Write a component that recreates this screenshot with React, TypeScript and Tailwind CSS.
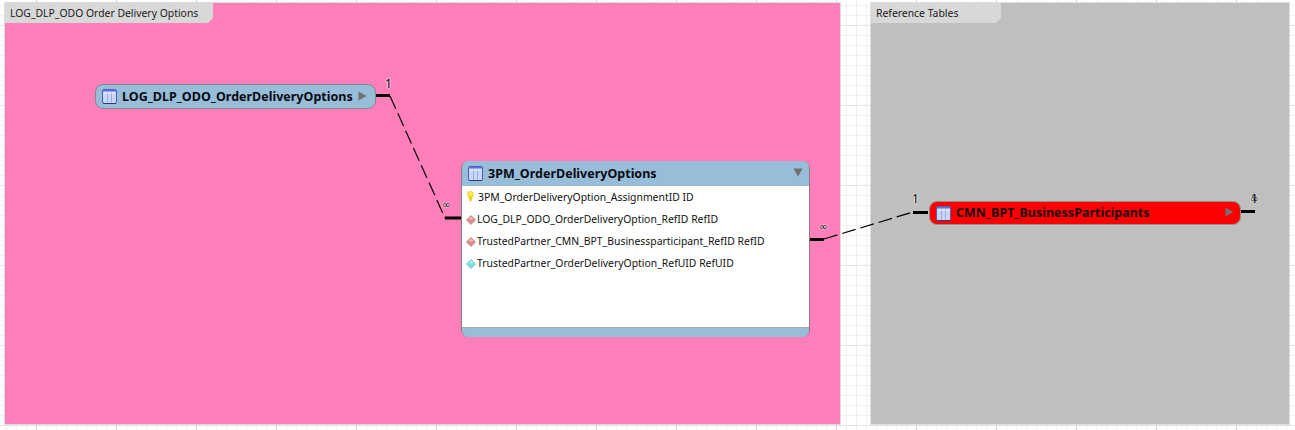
const font = { fontFamily: '"DejaVu Sans", sans-serif' };
const titleFont = { fontFamily: '"Noto Sans", sans-serif' };
function TableIcon() {
  return (
    <svg width="15" height="15" viewBox="0 0 15 15" className="shrink-0">
      <rect x="0.5" y="0.5" width="14" height="14" rx="1.5" fill="#c9d6f4" stroke="#4a5cc0" />
      <rect x="1" y="1" width="13" height="1.5" fill="#5f74d8" />
      <path d="M5.5 3V13.5M9.5 3V13.5" stroke="#98a9e6" />
      <path d="M2 4H14" stroke="#eef2ff" />
      <path d="M1 14.5H14" stroke="#2f3a86" />
    </svg>
  );
}
function Diamond({ color, dark }: { color: string; dark: string }) {
  return (
    <svg width="10" height="10" viewBox="0 0 10 10" className="shrink-0">
      <path d="M5 0.5 9.5 5 5 9.5 0.5 5Z" fill={color} stroke={dark} strokeWidth="0.6" />
      <path d="M5 1.5 7.5 4.5 2.5 4.5Z" fill="#ffffff" opacity="0.45" />
    </svg>
  );
}
function Key() {
  return (
    <svg width="7" height="11" viewBox="0 0 7 11" className="shrink-0 -mt-[3px]">
      <ellipse cx="3.5" cy="3.5" rx="3" ry="3.2" fill="#ffe74a" stroke="#d8b400" strokeWidth="0.5" />
      <path d="M2.4 6H4.6V9L3.5 10.5 2.4 9Z" fill="#f5d000" stroke="#d8b400" strokeWidth="0.4" />
    </svg>
  );
}
function Tab({ label, className }: { label: string; className: string }) {
  return (
    <div
      className={`h-5 bg-[#d8d8d8] text-[10.4px] leading-[20px] text-[#1a1a1a] pl-[5px] [clip-path:polygon(0_0,100%_0,100%_75%,calc(100%-5px)_100%,0_100%)] ${className}`}
      style={{ fontFamily: '"Noto Sans", sans-serif' }}
    >
      {label}
    </div>
  );
}
function Arrow({ down }: { down?: boolean }) {
  return down ? (
    <svg width="10" height="9" viewBox="0 0 10 9" className="shrink-0 -mt-[2px]">
      <path d="M0.5 0.5H9.5L5 8.5Z" fill="#707070" />
    </svg>
  ) : (
    <svg width="9" height="10" viewBox="0 0 9 10" className="shrink-0 -mt-[2px]">
      <path d="M0.5 0.5 8.5 5 0.5 9.5Z" fill="#707070" />
    </svg>
  );
}
const rows = [
  { icon: <Key />, text: "3PM_OrderDeliveryOption_AssignmentID ID", cls: "pl-[5px] gap-[4px]" },
  { icon: <Diamond color="#e28b8b" dark="#a86a6a" />, text: "LOG_DLP_ODO_OrderDeliveryOption_RefID RefID", cls: "pl-[4px] gap-[1px]" },
  { icon: <Diamond color="#e28b8b" dark="#a86a6a" />, text: "TrustedPartner_CMN_BPT_Businessparticipant_RefID RefID", cls: "pl-[4px] gap-[1px]" },
  { icon: <Diamond color="#6fe3e3" dark="#6aa8a8" />, text: "TrustedPartner_OrderDeliveryOption_RefUID RefUID", cls: "pl-[4px] gap-[1px]" },
];
const halo = "[text-shadow:0_0_2px_#fff,0_0_2px_#fff]";
export default function App() {
  return (
    <div className="relative w-[1295px] h-[430px] overflow-hidden bg-white bg-[linear-gradient(to_right,#d0d0d0_1px,transparent_1px),linear-gradient(to_bottom,#e4e4e4_1px,transparent_1px),linear-gradient(to_right,#f0f0f0_1px,transparent_1px),linear-gradient(to_bottom,#f0f0f0_1px,transparent_1px)] bg-[size:80px_100%,100%_80px,10px_10px,10px_10px] bg-[position:36px_0,0_25px,6px_0,0_5px]">
      <div className="absolute left-[5px] top-[3px] w-[835px] h-[421px] bg-[#ff7fbb] shadow-[0_0_0_1px_#dcdcdc]">
        <Tab label="LOG_DLP_ODO Order Delivery Options" className="w-[208px]" />
      </div>
      <div className="absolute left-[871px] top-[3px] w-[418px] h-[421px] bg-[#bfbfbf] shadow-[0_0_0_1px_#e0e0e0]">
        <Tab label="Reference Tables" className="w-[130px]" />
      </div>

      <svg className="absolute inset-0" width="1295" height="430">
        <path d="M390 96 445 218M824 239 913 212" stroke="#000" strokeWidth="1.2" strokeDasharray="14 5" fill="none" />
        <path d="M376 95.5H390M445 218H461M810 239.5H824M913 212.5H928M1241 211.5H1255" stroke="#000" strokeWidth="3" fill="none" />
      </svg>

      <div className="absolute left-[95px] top-[84px] w-[281px] h-[25px] rounded-[8px] border border-[#808890] bg-[#98bdd8] flex items-center pl-[6px] pr-[8px]" style={titleFont}>
        <TableIcon />
        <span className="ml-[5px] mt-[2px] text-[12.5px] font-bold text-[#0a0a14] whitespace-nowrap flex-1">LOG_DLP_ODO_OrderDeliveryOptions</span>
        <Arrow />
      </div>

      <div className="absolute left-[461px] top-[161px] w-[349px] h-[176px] rounded-[7px] border-x border-[#808080] overflow-hidden flex flex-col">
        <div className="h-[25px] shrink-0 bg-[#98bdd8] flex items-center pl-[6px] pr-[6px]" style={titleFont}>
          <TableIcon />
          <span className="ml-[5px] mt-[2px] text-[12.5px] font-bold text-[#0a0a14] whitespace-nowrap flex-1">3PM_OrderDeliveryOptions</span>
          <Arrow down />
        </div>
        <div className="flex-1 bg-white pt-[1px] border-b border-[#a8a8a8]" style={{ fontFamily: '"Noto Sans", sans-serif' }}>
          {rows.map((r) => (
            <div key={r.text} className={`h-[22px] flex items-center text-[10.4px] text-[#111] whitespace-nowrap ${r.cls}`}>
              {r.icon}
              <span>{r.text}</span>
            </div>
          ))}
        </div>
        <div className="h-[9px] shrink-0 bg-[#98bdd8]" />
      </div>

      <div className="absolute left-[929px] top-[201px] w-[312px] h-[24px] rounded-[8px] border border-[#909090] bg-[#ff0000] flex items-center pl-[6px] pr-[6px]" style={titleFont}>
        <TableIcon />
        <span className="ml-[5px] mt-[1px] text-[12.5px] font-bold text-[#1a0000] whitespace-nowrap flex-1">CMN_BPT_BusinessParticipants</span>
        <Arrow />
      </div>

      <span className={`absolute left-[385px] top-[77px] text-[12px] leading-[14px] text-black ${halo}`} style={titleFont}>1</span>
      <span className={`absolute left-[912px] top-[192px] text-[12px] leading-[14px] text-black ${halo}`} style={titleFont}>1</span>
      <span className={`absolute left-[442px] top-[199px] text-[10px] leading-[12px] text-black ${halo}`} style={font}>∞</span>
      <span className={`absolute left-[819px] top-[221px] text-[10px] leading-[12px] text-black ${halo}`} style={font}>∞</span>
      <span className={`absolute left-[1250px] top-[192px] text-[10px] leading-[14px] text-black ${halo}`} style={font}>∞</span>
      <span className="absolute left-[1251px] top-[192px] text-[12px] leading-[14px] text-black" style={titleFont}>1</span>
    </div>
  );
}
